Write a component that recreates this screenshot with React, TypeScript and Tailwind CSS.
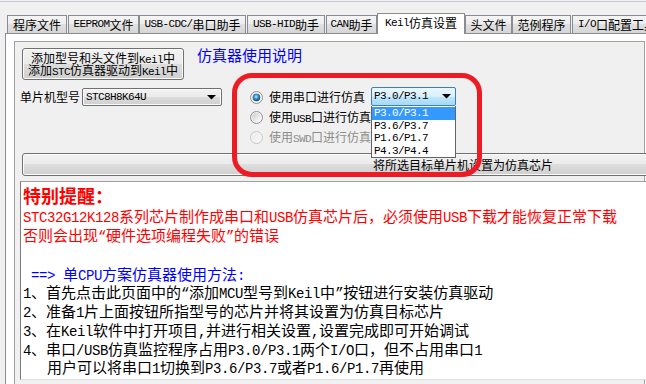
import React from "react";

type Run = { t: string; n: boolean };
function runs(s: string): Run[] {
  const out: Run[] = [];
  for (const ch of s) {
    const n = (ch.codePointAt(0) ?? 0) < 0x2e80;
    const last = out[out.length - 1];
    if (last && last.n === n) last.t += ch;
    else out.push({ t: ch, n });
  }
  return out;
}

function Txt({ s, big = false }: { s: string; big?: boolean }) {
  return (
    <>
      {runs(s).map((r, i) =>
        r.n ? (
          <span
            key={i}
            className={
              big
                ? "font-['Liberation_Mono',monospace] text-[14px] leading-[12px] tracking-[-0.4px]"
                : "font-['Liberation_Mono',monospace] text-[11px] leading-[9px] tracking-[-0.6px]"
            }
          >
            {r.t}
          </span>
        ) : (
          <span key={i}>{r.t}</span>
        )
      )}
    </>
  );
}

function Radio({ id, checked = false, disabled = false }: { id: string; checked?: boolean; disabled?: boolean }) {
  return (
    <svg width="13" height="13" viewBox="0 0 13 13" className="shrink-0">
      <defs>
        <linearGradient id={`rf-${id}`} x1="0" y1="0" x2="1" y2="1">
          <stop offset="0" stopColor={disabled ? "#ebebeb" : "#cdcdcd"} />
          <stop offset="1" stopColor={disabled ? "#f8f8f8" : "#ffffff"} />
        </linearGradient>
        <radialGradient id={`rd-${id}`} cx="0.45" cy="0.4" r="0.6">
          <stop offset="0" stopColor="#b4ecff" />
          <stop offset="0.45" stopColor="#3c9ad8" />
          <stop offset="1" stopColor="#0b3a66" />
        </radialGradient>
      </defs>
      <circle cx="6.5" cy="6.5" r="6" fill="#f6f6f6" stroke={disabled ? "#c6c6c6" : "#8e8f8f"} />
      <circle cx="6.5" cy="6.5" r="4.7" fill={`url(#rf-${id})`} />
      {checked && <circle cx="6.5" cy="6.5" r="3.7" fill={`url(#rd-${id})`} />}
    </svg>
  );
}

function Arrow() {
  return (
    <svg width="9" height="5" viewBox="0 0 9 5" className="shrink-0">
      <polygon points="0,0 9,0 4.5,4.6" fill="#000" />
    </svg>
  );
}

const tabs = [
  { t: "程序文件", c: "w-[60px] ml-0" },
  { t: "EEPROM文件", c: "w-[71px] ml-[1px]" },
  { t: "USB-CDC/串口助手", c: "w-[107px] ml-0" },
  { t: "USB-HID助手", c: "w-[78px] ml-[1px]" },
  { t: "CAN助手", c: "w-[51px] ml-[1px]" },
  { t: "Keil仿真设置", c: "w-[88px] ml-0", sel: true },
  { t: "头文件", c: "w-[47px] ml-0" },
  { t: "范例程序", c: "w-[59px] ml-0" },
  { t: "I/O口配置工具", c: "w-[90px] ml-[1px]" },
];

export default function App() {
  return (
    <div className="relative flex h-[384px] w-[646px] flex-col overflow-hidden bg-[#f0f0f0] font-['Noto_Sans_CJK_SC',sans-serif] text-[12px] text-black">
      {/* top line */}
      <div className="mt-px h-px shrink-0 bg-[#c5c9d9]" />
      <div className="h-[11px] shrink-0" />

      {/* tab strip */}
      <div className="relative z-10 flex h-[20px] shrink-0 items-end pl-[7px]">
        {tabs.map((tb) =>
          tb.sel ? (
            <div
              key={tb.t}
              className={`${tb.c} relative -mb-px flex h-[21px] shrink-0 items-center justify-center whitespace-pre border-x border-t border-[#898c95] bg-white pb-[2px]`}
            >
              <Txt s={tb.t} />
            </div>
          ) : (
            <div
              key={tb.t}
              className={`${tb.c} flex h-[18px] shrink-0 items-center justify-center whitespace-pre border-x border-t border-[#898c95] bg-[linear-gradient(to_bottom,#f5f5f5_0%,#ececec_50%,#e0e0e0_50%,#d6d6d6_100%)]`}
            >
              <Txt s={tb.t} />
            </div>
          )
        )}
      </div>

      {/* tab page */}
      <div className="ml-[5px] flex flex-1 flex-col border-l border-t border-[#898c95] bg-white pl-[8px] pt-[7px]">
        <div className="flex w-[631px] flex-1 flex-col border-x border-t border-[#a0a0a0] bg-[#f0f0f0]">
          {/* row 1 */}
          <div className="mt-[6px] flex shrink-0 items-start pl-[7px]">
            <div className="flex h-[32px] w-[162px] shrink-0 flex-col items-center justify-center whitespace-pre rounded-[3px] border border-[#707070] bg-[linear-gradient(to_bottom,#f2f2f2_0%,#ebebeb_50%,#dddddd_50%,#cfcfcf_100%)] leading-[12.5px] shadow-[inset_0_0_0_1px_#fcfcfc]">
              <div className="h-[12.5px]">
                <Txt s="添加型号和头文件到Keil中" />
              </div>
              <div className="h-[12.5px]">
                <Txt s="添加STC仿真器驱动到Keil中" />
              </div>
            </div>
            <div className="-mt-px ml-[13px] text-[15px] leading-[16px] text-[#0000ff]">仿真器使用说明</div>
          </div>

          {/* row 2 */}
          <div className="mt-[7px] flex shrink-0 items-start pl-[5px]">
            <div className="mt-px flex h-[18px] items-center">
              <span>单片机型号</span>
              <div className="ml-[2px] flex h-[18px] w-[140px] items-center justify-between rounded-[2px] border border-[#707070] bg-[linear-gradient(to_bottom,#f2f2f2_0%,#ebebeb_50%,#dddddd_50%,#cfcfcf_100%)] pl-[3px] pr-[5px] shadow-[inset_0_0_0_1px_#fcfcfc]">
                <span className="font-['Liberation_Mono',monospace] text-[11px] tracking-[-0.6px]">STC8H8K64U</span>
                <Arrow />
              </div>
            </div>

            <div className="ml-[28px] flex flex-col">
              <div className="flex h-[20px] items-center">
                <Radio id="r1" checked />
                <span className="ml-[6px]">使用串口进行仿真</span>
                <div className="relative ml-[6px] self-start">
                  <div className="flex h-[19px] w-[85px] items-center justify-between rounded-[2px] border border-[#3c7fb1] bg-[linear-gradient(to_bottom,#eaf6fd_0%,#d9f0fc_50%,#bee6fd_50%,#a7d9f5_100%)] pl-[2px] pr-[4px]">
                    <span className="font-['Liberation_Mono',monospace] text-[11px] tracking-[-0.6px]">P3.0/P3.1</span>
                    <Arrow />
                  </div>
                  <div className="absolute left-0 top-[19px] z-20 w-[85px] border-x border-b border-[#646464] bg-white pt-px">
                    {["P3.0/P3.1", "P3.6/P3.7", "P1.6/P1.7", "P4.3/P4.4"].map((p, i) => (
                      <div
                        key={p}
                        className={
                          i === 0
                            ? "flex h-[12.5px] items-center bg-[#3399ff] pl-[2px] text-white"
                            : "flex h-[12.5px] items-center pl-[2px]"
                        }
                      >
                        <span className="font-['Liberation_Mono',monospace] text-[11px] tracking-[-0.6px]">{p}</span>
                      </div>
                    ))}
                  </div>
                </div>
              </div>
              <div className="flex h-[20px] items-center whitespace-pre">
                <Radio id="r2" />
                <span className="ml-[6px]">
                  <Txt s="使用USB口进行仿真" />
                </span>
              </div>
              <div className="flex h-[20px] items-center whitespace-pre text-[#8d8d8d]">
                <Radio id="r3" disabled />
                <span className="ml-[6px]">
                  <Txt s="使用SWD口进行仿真" />
                </span>
              </div>
            </div>
          </div>

          {/* wide button */}
          <div className="ml-[7px] mt-[6px] flex h-[23px] w-[882px] shrink-0 items-center justify-center rounded-[3px] border border-[#707070] bg-[linear-gradient(to_bottom,#f2f2f2_0%,#ebebeb_50%,#dddddd_50%,#cfcfcf_100%)] shadow-[inset_0_0_0_1px_#fcfcfc]">
            将所选目标单片机设置为仿真芯片
          </div>

          {/* text area */}
          <div className="ml-[5px] mt-[5px] h-[199px] w-[700px] shrink-0 whitespace-pre border-b border-l border-t border-b-[#dedede] border-l-[#7a7a7a] border-t-[#a0a0a0] bg-white pl-[2px] pt-px">
            <div className="h-[24px] text-[18px] font-bold leading-[24px] text-[#ff0000]">特别提醒：</div>
            <div className="text-[15px] leading-[18.75px] text-[#ff0000]">
              <div className="h-[18.75px]">
                <Txt big s="STC32G12K128系列芯片制作成串口和USB仿真芯片后，必须使用USB下载才能恢复正常下载" />
              </div>
              <div className="h-[18.75px]">
                <Txt big s="否则会出现“硬件选项编程失败”的错误" />
              </div>
            </div>
            <div className="h-[20px]" />
            <div className="text-[15px] leading-[18.75px]">
              <div className="h-[18.75px] text-[#0000ff]">
                <Txt big s=" ==> 单CPU方案仿真器使用方法:" />
              </div>
              <div className="h-[18.75px]">
                <Txt big s="1、首先点击此页面中的“添加MCU型号到Keil中”按钮进行安装仿真驱动" />
              </div>
              <div className="h-[18.75px]">
                <Txt big s="2、准备1片上面按钮所指型号的芯片并将其设置为仿真目标芯片" />
              </div>
              <div className="h-[18.75px]">
                <Txt big s="3、在Keil软件中打开项目,并进行相关设置,设置完成即可开始调试" />
              </div>
              <div className="h-[18.75px]">
                <Txt big s="4、串口/USB仿真监控程序占用P3.0/P3.1两个I/O口，但不占用串口1" />
              </div>
              <div className="h-[18.75px]">
                <Txt big s="   用户可以将串口1切换到P3.6/P3.7或者P1.6/P1.7再使用" />
              </div>
            </div>
          </div>
        </div>
      </div>

      {/* red annotation */}
      <div className="pointer-events-none absolute left-[232px] top-[73px] z-30 h-[104px] w-[250px] rounded-[20px] border-[5px] border-[#ed1c24]" />
    </div>
  );
}
